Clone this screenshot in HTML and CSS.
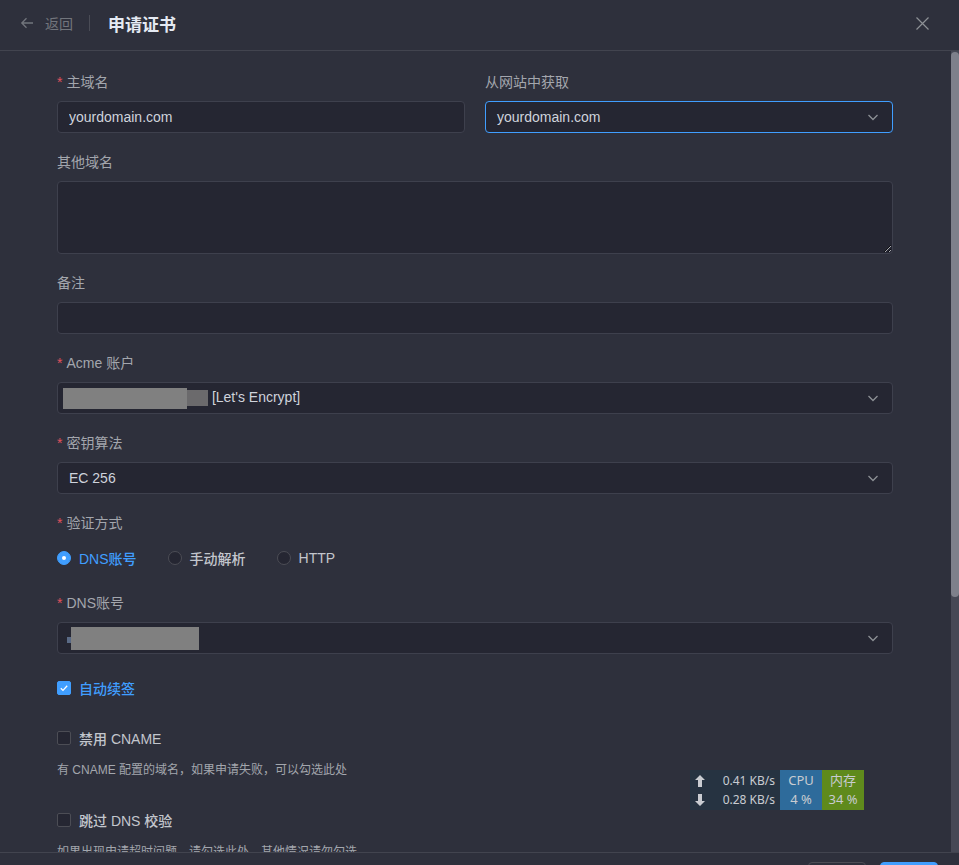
FILE: index.html
```html
<!DOCTYPE html>
<html>
<head>
  <title>申请证书</title>
  <link rel="stylesheet" href="styles.css">
</head>
<body>
  <div class="drawer">
    <div class="drawer-header">
      <span class="back">
        <svg width="14" height="14" viewBox="0 0 14 14"><path d="M13 7H1.8M6.5 2.3L1.8 7l4.7 4.7" fill="none" stroke="currentColor" stroke-width="1.3"/></svg>
        <span>返回</span>
      </span>
      <span class="divider"></span>
      <span class="title">申请证书</span>
      <span class="close">
        <svg width="13" height="13" viewBox="0 0 13 13"><path d="M0.5 0.5l12 12M12.5 0.5l-12 12" fill="none" stroke="currentColor" stroke-width="1.2"/></svg>
      </span>
    </div>

    <div class="drawer-main">
      <div class="drawer-body">
        <form class="form">
          <div class="form-row">
            <div class="form-item">
              <label class="required">主域名</label>
              <input type="text" class="input" value="yourdomain.com">
            </div>
            <div class="form-item">
              <label>从网站中获取</label>
              <div class="select is-focus">
                <span>yourdomain.com</span>
                <svg class="arrow" width="14" height="14" viewBox="0 0 14 14"><path d="M2.5 5l4.5 4.5L11.5 5" fill="none" stroke="currentColor" stroke-width="1.3"/></svg>
              </div>
            </div>
          </div>

          <div class="form-item">
            <label>其他域名</label>
            <textarea class="textarea"></textarea>
          </div>

          <div class="form-item">
            <label>备注</label>
            <input type="text" class="input">
          </div>

          <div class="form-item">
            <label class="required">Acme 账户</label>
            <div class="select">
              <span><span class="mask mask-acme"></span><span class="mask mask-acme2"></span> [Let's Encrypt]</span>
              <svg class="arrow" width="14" height="14" viewBox="0 0 14 14"><path d="M2.5 5l4.5 4.5L11.5 5" fill="none" stroke="currentColor" stroke-width="1.3"/></svg>
            </div>
          </div>

          <div class="form-item">
            <label class="required">密钥算法</label>
            <div class="select">
              <span>EC 256</span>
              <svg class="arrow" width="14" height="14" viewBox="0 0 14 14"><path d="M2.5 5l4.5 4.5L11.5 5" fill="none" stroke="currentColor" stroke-width="1.3"/></svg>
            </div>
          </div>

          <div class="form-item">
            <label class="required">验证方式</label>
            <div class="radio-group">
              <span class="radio is-checked"><span class="radio-inner"></span>DNS账号</span>
              <span class="radio"><span class="radio-inner"></span>手动解析</span>
              <span class="radio"><span class="radio-inner"></span>HTTP</span>
            </div>
          </div>

          <div class="form-item">
            <label class="required">DNS账号</label>
            <div class="select">
              <span class="mask-wrap"><span class="mask-dot"></span><span class="mask mask-dns"></span></span>
              <svg class="arrow" width="14" height="14" viewBox="0 0 14 14"><path d="M2.5 5l4.5 4.5L11.5 5" fill="none" stroke="currentColor" stroke-width="1.3"/></svg>
            </div>
          </div>

          <div class="form-item">
            <span class="checkbox is-checked">
              <span class="checkbox-inner">
                <svg width="10" height="10" viewBox="0 0 10 10"><path d="M1.8 5.2l2.2 2.2 4.2-4.6" fill="none" stroke="#fff" stroke-width="1.3"/></svg>
              </span>自动续签
            </span>
          </div>

          <div class="form-item">
            <span class="checkbox"><span class="checkbox-inner"></span>禁用 CNAME</span>
            <div class="help">有 CNAME 配置的域名，如果申请失败，可以勾选此处</div>
          </div>

          <div class="form-item">
            <span class="checkbox"><span class="checkbox-inner"></span>跳过 DNS 校验</span>
            <div class="help">如果出现申请超时问题，请勾选此处，其他情况请勿勾选</div>
          </div>

          <div class="form-item">
            <span class="checkbox"><span class="checkbox-inner"></span>推送证书到服务器</span>
            <div class="help">申请成功后自动推送到已选择的服务器</div>
          </div>
        </form>
      </div>
      <div class="scrollbar">
        <div class="scrollbar-thumb"></div>
      </div>
    </div>

    <div class="drawer-footer">
      <button type="button" class="btn">取消</button>
      <button type="button" class="btn btn-primary">确定</button>
    </div>
  </div>

  <div class="monitor">
    <div class="net">
      <div class="net-row">
        <svg width="10" height="12" viewBox="0 0 10 12"><path d="M5 0L10 5H7v7H3V5H0z" fill="#c9ccd1"/></svg>
        <span>0.41 KB/s</span>
      </div>
      <div class="net-row">
        <svg width="10" height="12" viewBox="0 0 10 12"><path d="M5 12L10 7H7V0H3v7H0z" fill="#c9ccd1"/></svg>
        <span>0.28 KB/s</span>
      </div>
    </div>
    <div class="stat stat-cpu"><span>CPU</span><span>4 %</span></div>
    <div class="stat stat-mem"><span>内存</span><span>34 %</span></div>
  </div>
</body>
</html>
```

FILE: styles.css
```css
html,
body {
  height: 865px;
  overflow: hidden;
}

body {
  margin: 0;
  background-color: #2e303c;
  font-family: "Liberation Sans", "Noto Sans CJK SC", sans-serif;
  font-size: 14px;
  color: #cfd3dc;
}

/* drawer is taller than the window, footer is cut off */
.drawer {
  height: 904px;
  display: flex;
  flex-direction: column;
}

/* header */
.drawer-header {
  height: 51px;
  box-sizing: border-box;
  border-bottom: 1px solid #42444f;
  padding: 0 20px 4px;
  display: flex;
  align-items: center;
  flex-shrink: 0;
}

.back {
  display: flex;
  align-items: center;
  gap: 11px;
  color: #72757c;
  font-size: 14px;
}

.back svg {
  display: block;
}

.divider {
  width: 1px;
  height: 16px;
  background-color: #4a4c56;
  margin: 0 18px 0 16px;
}

.title {
  font-size: 17px;
  font-weight: bold;
  color: #e5eaf3;
  flex: 1;
}

.close {
  color: #8d9095;
  display: flex;
  margin-right: 10px;
}

/* body + scrollbar */
.drawer-main {
  flex: 1;
  display: flex;
  min-height: 0;
}

.drawer-body {
  flex: 1;
  overflow: hidden;
  padding: 20px 58px 0 57px;
}

.scrollbar {
  width: 8px;
  background-color: #464855;
  padding-top: 1px;
}

.scrollbar-thumb {
  height: 545px;
  background-color: #7e808b;
  border-radius: 4px;
}

.form-row {
  display: grid;
  grid-template-columns: 1fr 1fr;
  gap: 20px;
}

.form-item {
  margin-bottom: 18px;
}

.form-item label {
  display: block;
  line-height: 22px;
  margin-bottom: 8px;
  color: #a3a6ad;
}

.form-item label.required::before {
  content: "*";
  color: #e0505c;
  margin-right: 4px;
}

.input,
.select,
.textarea {
  display: flex;
  align-items: center;
  width: 100%;
  box-sizing: border-box;
  height: 32px;
  padding: 0 11px;
  background-color: #252632;
  border: 1px solid #3e404d;
  border-radius: 4px;
  font-family: inherit;
  font-size: 14px;
  color: #cfd3dc;
  outline: none;
}

.select {
  justify-content: space-between;
  padding-right: 12px;
}

.select.is-focus {
  border-color: #409eff;
}

.arrow {
  color: #8d9095;
  flex-shrink: 0;
}

.textarea {
  display: block;
  height: 73px;
  padding: 5px 11px;
  resize: vertical;
}

.mask {
  display: inline-block;
  background-color: #808080;
  vertical-align: middle;
}

.mask-acme {
  width: 124px;
  height: 21px;
  margin-left: -6px;
}

.mask-acme2 {
  width: 21px;
  height: 16px;
  background-color: #6b6a6c;
}

.mask-wrap {
  display: flex;
  align-items: center;
}

.mask-dot {
  width: 4px;
  height: 6px;
  background-color: #5a6a86;
  margin: 4px 0 0 -2px;
}

.mask-dns {
  width: 128px;
  height: 23px;
}

/* radio */
.radio-group {
  height: 32px;
  display: flex;
  align-items: center;
}

.radio {
  display: flex;
  align-items: center;
  margin-right: 31px;
  font-weight: 500;
  color: #c3c6cd;
}

.radio-inner {
  width: 14px;
  height: 14px;
  box-sizing: border-box;
  border: 1px solid #4c4d55;
  border-radius: 50%;
  background-color: #252632;
  margin-right: 8px;
  position: relative;
}

.radio.is-checked {
  color: #409eff;
}

.radio.is-checked .radio-inner {
  background-color: #409eff;
  border-color: #409eff;
}

.radio.is-checked .radio-inner::after {
  content: "";
  position: absolute;
  left: 4px;
  top: 4px;
  width: 4px;
  height: 4px;
  border-radius: 50%;
  background-color: #fff;
}

/* checkbox */
.checkbox {
  height: 32px;
  display: flex;
  align-items: center;
  font-weight: 500;
  color: #c3c6cd;
}

.checkbox-inner {
  width: 14px;
  height: 14px;
  box-sizing: border-box;
  border: 1px solid #4c4d55;
  border-radius: 2px;
  background-color: #252632;
  margin-right: 8px;
  display: flex;
  align-items: center;
  justify-content: center;
}

.checkbox.is-checked {
  color: #409eff;
}

.checkbox.is-checked .checkbox-inner {
  background-color: #409eff;
  border-color: #409eff;
}

.help {
  font-size: 12px;
  line-height: 32px;
  color: #a3a6ad;
}

/* footer */
.drawer-footer {
  flex-shrink: 0;
  border-top: 1px solid #42444f;
  padding: 9px 21px 10px;
  display: flex;
  justify-content: flex-end;
  gap: 14px;
}

.btn {
  width: 58px;
  height: 32px;
  border: 1px solid #4c4d55;
  border-radius: 4px;
  background-color: #2e303c;
  color: #cfd3dc;
  font-family: inherit;
  font-size: 14px;
}

.btn-primary {
  background-color: #409eff;
  border-color: #409eff;
  color: #fff;
}

/* system monitor overlay */
.monitor {
  position: absolute;
  left: 690px;
  top: 770px;
  height: 40px;
  display: flex;
  font-family: "Noto Sans", "Noto Sans CJK SC", sans-serif;
  font-size: 12px;
  color: #c9ccd1;
}

.net {
  width: 90px;
  box-sizing: border-box;
  background-color: #263341;
  padding: 1px 5px 0 5px;
}

.net-row {
  height: 19px;
  display: flex;
  align-items: center;
  justify-content: space-between;
}

.stat {
  width: 42px;
  display: flex;
  flex-direction: column;
  align-items: center;
  justify-content: center;
  line-height: 19px;
  font-size: 13px;
}

.stat-cpu {
  background-color: #2e6b9b;
}

.stat-mem {
  background-color: #5f8a1c;
}
```
